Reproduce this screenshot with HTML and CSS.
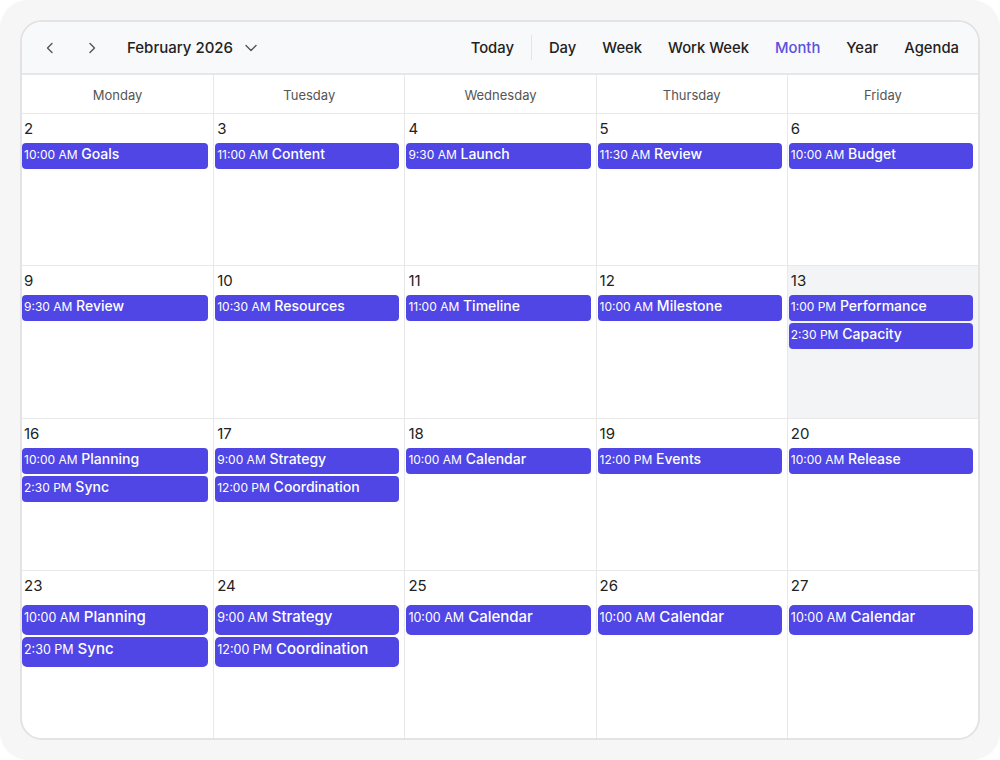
FILE: index.html
```html
<!DOCTYPE html>
<html lang="en">
<head>
    <meta charset="UTF-8">
    <title>Scheduler - Month</title>
    <link rel="stylesheet" href="styles.css">
</head>
<body>
    <div class="frame">
        <div class="scheduler">
            <div class="toolbar">
                <div class="toolbar-left">
                    <button class="nav-btn" aria-label="Previous">
                        <svg width="14" height="14" viewBox="0 0 14 14"><path d="M9 2.5L4.5 7L9 11.5" fill="none" stroke="#555" stroke-width="1.4" stroke-linecap="round" stroke-linejoin="round"/></svg>
                    </button>
                    <button class="nav-btn" aria-label="Next">
                        <svg width="14" height="14" viewBox="0 0 14 14"><path d="M5 2.5L9.5 7L5 11.5" fill="none" stroke="#555" stroke-width="1.4" stroke-linecap="round" stroke-linejoin="round"/></svg>
                    </button>
                    <div class="date-range">
                        <span>February 2026</span>
                        <svg width="16" height="16" viewBox="0 0 16 16"><path d="M3 5.5L8 10.5L13 5.5" fill="none" stroke="#555" stroke-width="1.4" stroke-linecap="round" stroke-linejoin="round"/></svg>
                    </div>
                </div>
                <div class="toolbar-right">
                    <span class="view today">Today</span>
                    <span class="divider"></span>
                    <span class="view">Day</span>
                    <span class="view">Week</span>
                    <span class="view">Work Week</span>
                    <span class="view active">Month</span>
                    <span class="view">Year</span>
                    <span class="view">Agenda</span>
                </div>
            </div>

            <div class="day-names">
                <div>Monday</div>
                <div>Tuesday</div>
                <div>Wednesday</div>
                <div>Thursday</div>
                <div>Friday</div>
            </div>

            <div class="month-grid">
                <!-- week 1 -->
                <div class="cell">
                    <div class="date">2</div>
                    <div class="event"><span class="time">10:00 AM</span> Goals</div>
                </div>
                <div class="cell">
                    <div class="date">3</div>
                    <div class="event"><span class="time">11:00 AM</span> Content</div>
                </div>
                <div class="cell">
                    <div class="date">4</div>
                    <div class="event"><span class="time">9:30 AM</span> Launch</div>
                </div>
                <div class="cell">
                    <div class="date">5</div>
                    <div class="event"><span class="time">11:30 AM</span> Review</div>
                </div>
                <div class="cell">
                    <div class="date">6</div>
                    <div class="event"><span class="time">10:00 AM</span> Budget</div>
                </div>

                <!-- week 2 -->
                <div class="cell">
                    <div class="date">9</div>
                    <div class="event"><span class="time">9:30 AM</span> Review</div>
                </div>
                <div class="cell">
                    <div class="date">10</div>
                    <div class="event"><span class="time">10:30 AM</span> Resources</div>
                </div>
                <div class="cell">
                    <div class="date">11</div>
                    <div class="event"><span class="time">11:00 AM</span> Timeline</div>
                </div>
                <div class="cell">
                    <div class="date">12</div>
                    <div class="event"><span class="time">10:00 AM</span> Milestone</div>
                </div>
                <div class="cell selected">
                    <div class="date">13</div>
                    <div class="event"><span class="time">1:00 PM</span> Performance</div>
                    <div class="event"><span class="time">2:30 PM</span> Capacity</div>
                </div>

                <!-- week 3 -->
                <div class="cell">
                    <div class="date">16</div>
                    <div class="event"><span class="time">10:00 AM</span> Planning</div>
                    <div class="event"><span class="time">2:30 PM</span> Sync</div>
                </div>
                <div class="cell">
                    <div class="date">17</div>
                    <div class="event"><span class="time">9:00 AM</span> Strategy</div>
                    <div class="event"><span class="time">12:00 PM</span> Coordination</div>
                </div>
                <div class="cell">
                    <div class="date">18</div>
                    <div class="event"><span class="time">10:00 AM</span> Calendar</div>
                </div>
                <div class="cell">
                    <div class="date">19</div>
                    <div class="event"><span class="time">12:00 PM</span> Events</div>
                </div>
                <div class="cell">
                    <div class="date">20</div>
                    <div class="event"><span class="time">10:00 AM</span> Release</div>
                </div>

                <!-- week 4 -->
                <div class="cell last">
                    <div class="date">23</div>
                    <div class="event"><span class="time">10:00 AM</span> Planning</div>
                    <div class="event"><span class="time">2:30 PM</span> Sync</div>
                </div>
                <div class="cell last">
                    <div class="date">24</div>
                    <div class="event"><span class="time">9:00 AM</span> Strategy</div>
                    <div class="event"><span class="time">12:00 PM</span> Coordination</div>
                </div>
                <div class="cell last">
                    <div class="date">25</div>
                    <div class="event"><span class="time">10:00 AM</span> Calendar</div>
                </div>
                <div class="cell last">
                    <div class="date">26</div>
                    <div class="event"><span class="time">10:00 AM</span> Calendar</div>
                </div>
                <div class="cell last">
                    <div class="date">27</div>
                    <div class="event"><span class="time">10:00 AM</span> Calendar</div>
                </div>
            </div>
        </div>
    </div>
</body>
</html>
```

FILE: styles.css
```css
html, body {
    margin: 0;
    padding: 0;
    background-color: #FFFFFF;
}
body {
    font-family: 'Inter', 'Noto Sans', sans-serif;
    color: #222;
}
.frame {
    width: 1000px;
    height: 760px;
    box-sizing: border-box;
    padding: 20px;
    background-color: #F6F6F7;
    border-radius: 28px;
}
.scheduler {
    height: 720px;
    box-sizing: border-box;
    border: 2px solid #E3E3E5;
    border-radius: 22px;
    background-color: #FFFFFF;
    overflow: hidden;
    display: flex;
    flex-direction: column;
}
.toolbar {
    height: 51px;
    flex: none;
    display: flex;
    align-items: center;
    justify-content: space-between;
    background-color: #F8F9FB;
    border-bottom: 2px solid #E6E7EA;
    padding: 0 19px 0 14px;
}
.toolbar-left {
    display: flex;
    align-items: center;
}
.nav-btn {
    width: 28px;
    height: 28px;
    margin-right: 14px;
    border: none;
    background: none;
    padding: 0;
    display: flex;
    align-items: center;
    justify-content: center;
}
.date-range {
    display: flex;
    align-items: center;
    gap: 10px;
    margin-left: 7px;
    font-size: 15px;
    font-weight: 500;
    color: #222;
}
.toolbar-right {
    display: flex;
    align-items: center;
    gap: 26px;
}
.view {
    font-size: 14.8px;
    font-weight: 500;
    color: #222;
}
.view.active {
    color: #5B50E0;
}
.divider {
    width: 1px;
    height: 25px;
    background-color: #E3E4E7;
    margin: 0 -9px;
}
.day-names {
    height: 38px;
    flex: none;
    display: grid;
    grid-template-columns: repeat(5, 1fr);
    border-bottom: 1px solid #E8E8EA;
}
.day-names div {
    display: flex;
    align-items: center;
    justify-content: center;
    padding-top: 2px;
    font-size: 13px;
    color: #555;
    border-left: 1px solid #E8E8EA;
}
.day-names div:first-child {
    border-left: none;
}
.month-grid {
    flex: 1;
    display: grid;
    grid-template-columns: repeat(5, 1fr);
    grid-template-rows: 152px 153px 152px 1fr;
}
.cell {
    border-left: 1px solid #E8E8EA;
    border-bottom: 1px solid #E8E8EA;
    padding: 6px 5px 0 1px;
    display: flex;
    flex-direction: column;
    gap: 2px;
    min-width: 0;
}
.cell:nth-child(5n+1) {
    border-left: none;
    padding-left: 0;
}
.cell.last {
    border-bottom: none;
}
.cell.selected {
    background-color: #F3F4F6;
}
.date {
    font-size: 15px;
    line-height: 18px;
    color: #222;
    padding-left: 2px;
    margin-bottom: 3px;
}
.event {
    height: 26px;
    box-sizing: border-box;
    background-color: #4F46E5;
    border-radius: 4px;
    color: #FFFFFF;
    font-size: 14px;
    font-weight: 500;
    line-height: 22px;
    padding: 0 2px;
    white-space: nowrap;
    overflow: hidden;
}
.event .time {
    font-size: 12px;
    font-weight: 400;
}
.cell.last .date {
    margin-bottom: 8px;
}
.cell.last .event {
    height: 30px;
    font-size: 15px;
    line-height: 24px;
    border-radius: 5px;
}
.cell.last .event .time {
    font-size: 12.5px;
}
```
